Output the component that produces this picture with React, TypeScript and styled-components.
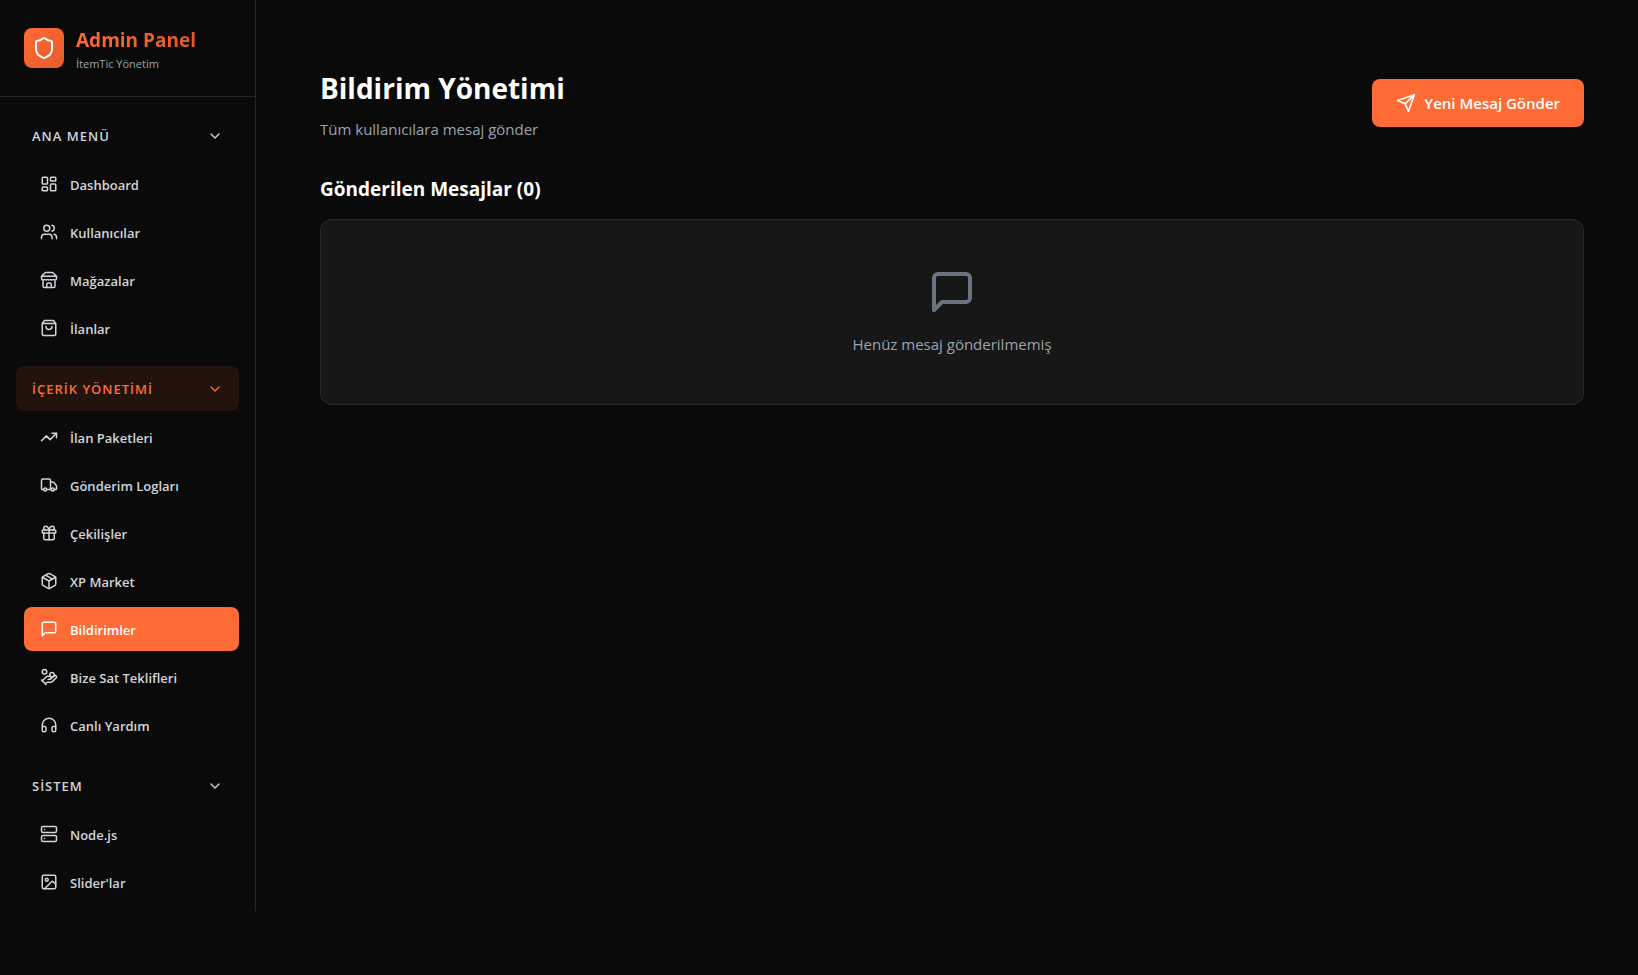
import React, { useState } from "react";
import styled, { createGlobalStyle, css } from "styled-components";
import {
  ChevronDown,
  Gift,
  HandCoins,
  Headphones,
  Image as ImageIcon,
  LayoutDashboard,
  Package,
  Server,
  Shield,
  TrendingUp,
  Truck,
  Users,
} from "lucide-react";

const GlobalStyle = createGlobalStyle`
  *, *::before, *::after { box-sizing: border-box; }
  body {
    margin: 0;
    background: #0a0a0a;
    color: #ffffff;
    font-family: "Segoe UI", "Open Sans", "Noto Sans", sans-serif;
    font-size: 15px;
    line-height: 24px;
  }
  h1, h2, p, ul { margin: 0; padding: 0; }
  button { font-family: inherit; cursor: pointer; border: 0; }
`;

const Shell = styled.div`
  display: flex;
  align-items: flex-start;
  min-height: 100vh;
`;

const Sidebar = styled.aside`
  flex: 0 0 256px;
  height: calc(100vh - 64px);
  overflow: hidden;
  border-right: 1px solid #262626;
`;

const Brand = styled.div`
  display: flex;
  align-items: center;
  gap: 12px;
  padding: 24px;
  border-bottom: 1px solid #262626;
`;

const BrandMark = styled.div`
  display: grid;
  place-items: center;
  width: 40px;
  height: 40px;
  border-radius: 8px;
  background: linear-gradient(135deg, #ff6b35, #e55a2b);
`;

const BrandName = styled.p`
  font-size: 19px;
  font-weight: 700;
  line-height: 32px;
  background: linear-gradient(90deg, #ff6b35, #e55a2b);
  background-clip: text;
  color: transparent;
`;

const BrandNote = styled.p`
  font-size: 11px;
  line-height: 16px;
  color: #9ca3af;
`;

const Nav = styled.nav`
  display: flex;
  flex-direction: column;
  gap: 16px;
  padding: 16px;
`;

const GroupToggle = styled.button<{ $active: boolean }>`
  display: flex;
  align-items: center;
  justify-content: space-between;
  width: 100%;
  height: 45px;
  padding: 0 16px;
  border-radius: 8px;
  background: ${(p) => (p.$active ? "rgba(255, 107, 53, 0.1)" : "transparent")};
  color: ${(p) => (p.$active ? "#ff6b35" : "#d1d5db")};
  font-size: 13px;
  font-weight: 600;
  line-height: 20px;
  letter-spacing: 1px;
`;

const Items = styled.ul`
  display: flex;
  flex-direction: column;
  gap: 4px;
  margin-top: 4px;
  padding-left: 8px;
  list-style: none;
`;

const ItemLink = styled.a<{ $current: boolean }>`
  display: flex;
  align-items: center;
  gap: 12px;
  height: 44px;
  padding: 0 16px;
  border-radius: 8px;
  color: #d1d5db;
  font-size: 13px;
  font-weight: 600;
  line-height: 20px;
  text-decoration: none;
  ${(p) =>
    p.$current &&
    css`
      background: #ff6b35;
      color: #ffffff;
    `}
`;

const ItemLabel = styled.span`
  padding-top: 2px;
`;

const Main = styled.main`
  flex: 1;
  min-width: 0;
  padding: 64px 54px 64px 64px;
`;

const PageHeader = styled.header`
  display: flex;
  align-items: center;
  justify-content: space-between;
  gap: 24px;
  margin-bottom: 32px;
`;

const Title = styled.h1`
  margin-bottom: 4px;
  font-size: 28px;
  font-weight: 700;
  line-height: 48px;
`;

const Muted = styled.p`
  color: #9ca3af;
`;

const Subtitle = styled(Muted)`
  line-height: 26px;
`;

const SendButton = styled.button`
  display: flex;
  align-items: center;
  gap: 8px;
  height: 48px;
  padding: 0 24px;
  border-radius: 8px;
  background: #ff6b35;
  color: #ffffff;
  font-size: 15px;
  font-weight: 600;
  line-height: 24px;
`;

const SectionTitle = styled.h2`
  margin-bottom: 15px;
  font-size: 19px;
  font-weight: 700;
  line-height: 30px;
`;

const EmptyCard = styled.div`
  display: flex;
  flex-direction: column;
  align-items: center;
  gap: 16px;
  padding: 48px;
  border: 1px solid #2a2a2a;
  border-radius: 12px;
  background: #171717;
  color: #6b7280;
`;

type IconProps = { size?: number };
type IconType = React.ComponentType<IconProps>;

const Outline = ({ size = 18, d }: IconProps & { d: string }) => (
  <svg
    width={size}
    height={size}
    viewBox="0 0 24 24"
    fill="none"
    stroke="currentColor"
    strokeWidth={2}
    strokeLinecap="round"
    strokeLinejoin="round"
    aria-hidden="true"
  >
    <path d={d} />
  </svg>
);

const MessageIcon = ({ size }: IconProps) => (
  <Outline size={size} d="M21 15a2 2 0 0 1-2 2H7l-4 4V5a2 2 0 0 1 2-2h14a2 2 0 0 1 2 2z" />
);

const SendIcon = ({ size }: IconProps) => (
  <Outline size={size} d="m22 2-7 20-4-9-9-4ZM22 2 11 13" />
);

const StoreIcon = ({ size }: IconProps) => (
  <Outline
    size={size}
    d="m2 7 4.41-4.41A2 2 0 0 1 7.83 2h8.34a2 2 0 0 1 1.42.59L22 7M4 12v8a2 2 0 0 0 2 2h12a2 2 0 0 0 2-2v-8M15 22v-4a2 2 0 0 0-2-2h-2a2 2 0 0 0-2 2v4M2 7h20M22 7v3a2 2 0 0 1-2 2a2.7 2.7 0 0 1-1.59-.63.7.7 0 0 0-.82 0A2.7 2.7 0 0 1 16 12a2.7 2.7 0 0 1-1.59-.63.7.7 0 0 0-.82 0A2.7 2.7 0 0 1 12 12a2.7 2.7 0 0 1-1.59-.63.7.7 0 0 0-.82 0A2.7 2.7 0 0 1 8 12a2.7 2.7 0 0 1-1.59-.63.7.7 0 0 0-.82 0A2.7 2.7 0 0 1 4 12a2 2 0 0 1-2-2V7"
  />
);

const BagIcon = ({ size }: IconProps) => (
  <Outline
    size={size}
    d="M6 2 3 6v14a2 2 0 0 0 2 2h14a2 2 0 0 0 2-2V6l-3-4ZM3 6h18M16 10a4 4 0 0 1-8 0"
  />
);

type Item = { label: string; icon: IconType };
type Group = { label: string; items: Item[] };

const groups: Group[] = [
  {
    label: "ANA MENÜ",
    items: [
      { label: "Dashboard", icon: LayoutDashboard },
      { label: "Kullanıcılar", icon: Users },
      { label: "Mağazalar", icon: StoreIcon },
      { label: "İlanlar", icon: BagIcon },
    ],
  },
  {
    label: "İÇERİK YÖNETİMİ",
    items: [
      { label: "İlan Paketleri", icon: TrendingUp },
      { label: "Gönderim Logları", icon: Truck },
      { label: "Çekilişler", icon: Gift },
      { label: "XP Market", icon: Package },
      { label: "Bildirimler", icon: MessageIcon },
      { label: "Bize Sat Teklifleri", icon: HandCoins },
      { label: "Canlı Yardım", icon: Headphones },
    ],
  },
  {
    label: "SİSTEM",
    items: [
      { label: "Node.js", icon: Server },
      { label: "Slider'lar", icon: ImageIcon },
    ],
  },
];

const CURRENT = "Bildirimler";

function NavGroup({ group }: { group: Group }) {
  const [open, setOpen] = useState(true);
  const active = group.items.some((item) => item.label === CURRENT);
  return (
    <div>
      <GroupToggle $active={active} aria-expanded={open} onClick={() => setOpen(!open)}>
        {group.label}
        <ChevronDown size={16} />
      </GroupToggle>
      {open && (
        <Items>
          {group.items.map(({ label, icon: Icon }) => (
            <li key={label}>
              <ItemLink
                href="#"
                $current={label === CURRENT}
                aria-current={label === CURRENT ? "page" : undefined}
              >
                <Icon size={18} />
                <ItemLabel>{label}</ItemLabel>
              </ItemLink>
            </li>
          ))}
        </Items>
      )}
    </div>
  );
}

export default function App() {
  return (
    <>
      <GlobalStyle />
      <Shell>
        <Sidebar>
          <Brand>
            <BrandMark>
              <Shield size={24} />
            </BrandMark>
            <div>
              <BrandName>Admin Panel</BrandName>
              <BrandNote>İtemTic Yönetim</BrandNote>
            </div>
          </Brand>
          <Nav>
            {groups.map((group) => (
              <NavGroup key={group.label} group={group} />
            ))}
          </Nav>
        </Sidebar>
        <Main>
          <PageHeader>
            <div>
              <Title>Bildirim Yönetimi</Title>
              <Subtitle>Tüm kullanıcılara mesaj gönder</Subtitle>
            </div>
            <SendButton>
              <SendIcon size={20} />
              Yeni Mesaj Gönder
            </SendButton>
          </PageHeader>
          <SectionTitle>Gönderilen Mesajlar (0)</SectionTitle>
          <EmptyCard>
            <MessageIcon size={48} />
            <Muted>Henüz mesaj gönderilmemiş</Muted>
          </EmptyCard>
        </Main>
      </Shell>
    </>
  );
}
